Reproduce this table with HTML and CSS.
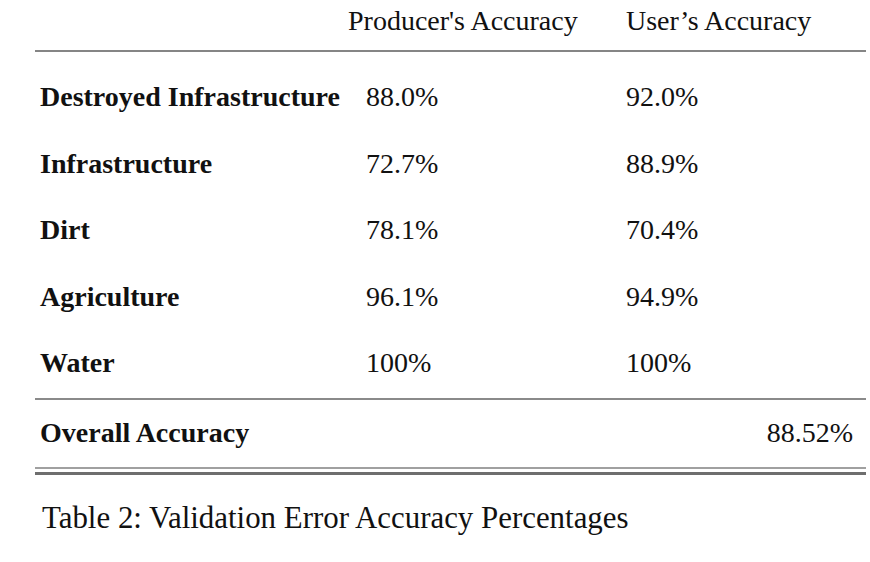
FILE: index.html
```html
<!DOCTYPE html>
<html>
<head>
<meta charset="utf-8">
<link rel="stylesheet" href="styles.css">
</head>
<body>
<div class="page">
  <div class="table">
    <div class="row head">
      <div class="cell label"></div>
      <div class="cell c2 shift">Producer's Accuracy</div>
      <div class="cell c3">User’s Accuracy</div>
    </div>
    <div class="body">
      <div class="row data">
        <div class="cell label">Destroyed Infrastructure</div>
        <div class="cell c2">88.0%</div>
        <div class="cell c3">92.0%</div>
      </div>
      <div class="row data">
        <div class="cell label">Infrastructure</div>
        <div class="cell c2">72.7%</div>
        <div class="cell c3">88.9%</div>
      </div>
      <div class="row data">
        <div class="cell label">Dirt</div>
        <div class="cell c2">78.1%</div>
        <div class="cell c3">70.4%</div>
      </div>
      <div class="row data">
        <div class="cell label">Agriculture</div>
        <div class="cell c2">96.1%</div>
        <div class="cell c3">94.9%</div>
      </div>
      <div class="row data">
        <div class="cell label">Water</div>
        <div class="cell c2">100%</div>
        <div class="cell c3">100%</div>
      </div>
    </div>
    <div class="row total">
      <div class="cell label">Overall Accuracy</div>
      <div class="cell c2"></div>
      <div class="cell c3 right">88.52%</div>
    </div>
    <div class="double"></div>
  </div>
  <p class="caption">Table 2: Validation Error Accuracy Percentages</p>
</div>
</body>
</html>
```

FILE: styles.css
```css
html, body {
  margin: 0;
  padding: 0;
  background: #ffffff;
}

.page {
  font-family: "Liberation Serif", "Times New Roman", serif;
  color: #111111;
  width: 870px;
  height: 562px;
  overflow: hidden;
}

.table {
  margin-left: 35px;
  width: 831px;
}

.row {
  display: grid;
  grid-template-columns: 331px 260px 1fr;
  font-size: 28px;
}

.cell {
  white-space: nowrap;
}

.label {
  padding-left: 5px;
  font-weight: bold;
}

.head {
  line-height: 32px;
  padding-top: 5px;
  height: 45px;
  border-bottom: 2px solid #858585;
}

.shift {
  margin-left: -18px;
}

.body {
  padding-top: 12px;
  padding-bottom: 1px;
  border-bottom: 2px solid #8a8a8a;
}

.data {
  height: 66.5px;
  line-height: 66.5px;
}

.total {
  line-height: 32px;
  padding-top: 17px;
  padding-bottom: 18px;
}

.right {
  text-align: right;
  padding-right: 13px;
}

.double {
  height: 3px;
  border-top: 2px solid #a0a0a0;
  border-bottom: 3px solid #6e6e6e;
}

.caption {
  margin: 26px 0 0 42px;
  font-size: 30.9px;
  line-height: 34px;
  color: #111111;
}
```
